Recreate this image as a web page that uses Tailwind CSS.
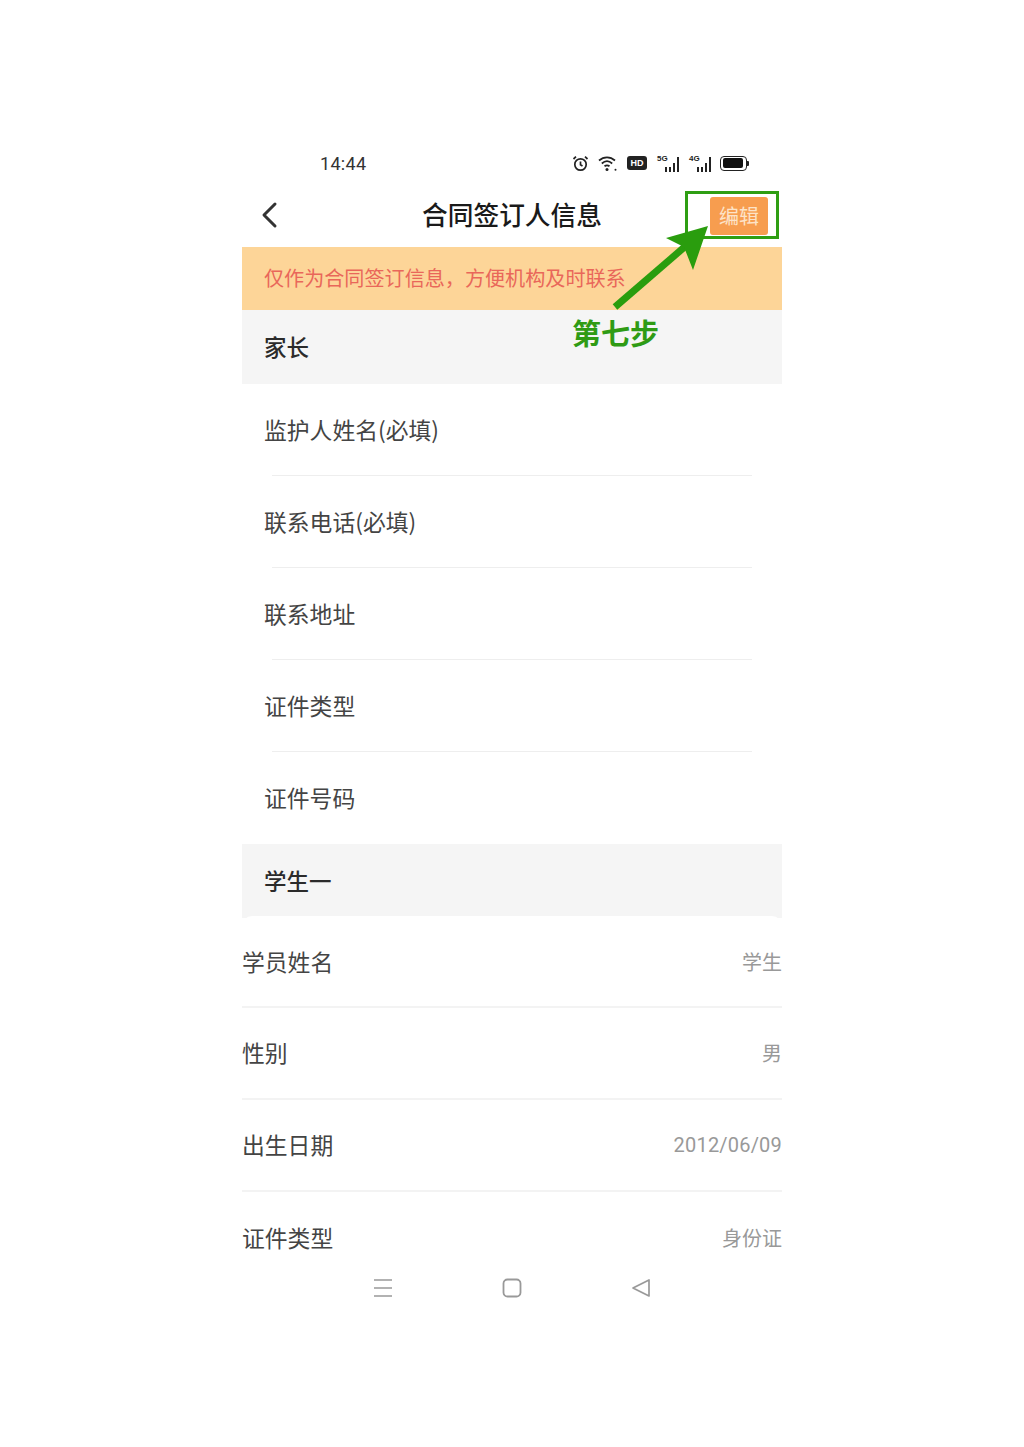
<!DOCTYPE html>
<html lang="zh"><head><meta charset="utf-8"><script src="https://cdn.jsdelivr.net/npm/@tailwindcss/browser@4"></script></head>
<body class="bg-white font-['Noto_Sans_CJK_SC','Noto_Sans',sans-serif]">
<div class="relative w-[1024px] h-[1447px] overflow-hidden flex justify-center pt-[145px]">
  <div class="w-[540px] h-[1170px] flex flex-col">
    <!-- status bar -->
    <div class="h-[36px] shrink-0 flex items-center justify-between pl-[78px] pr-[33px]">
      <span class="text-[18px] text-[#333] font-['Roboto','Inter',sans-serif] tracking-[0.3px]">14:44</span>
      <div class="flex items-center gap-[9px]">
        <svg width="17" height="17" viewBox="0 0 17 17" fill="none" stroke="#222" stroke-width="1.7"><circle cx="8.5" cy="9.5" r="5.7"/><path d="M8.5 6.5v3.2l2 1.2M1.5 4 4 1.7M15.5 4 13 1.7"/></svg>
        <svg width="20" height="17" viewBox="0 0 20 17" fill="none" stroke="#222" stroke-width="1.7"><path d="M1 5.5c4.800-4.300 11.200-4.300 16 0M3.800 8.500c3.200-2.800 7.200-2.800 10.400 0M6.500 11.300c1.700-1.300 3.300-1.300 5 0"/><circle cx="9" cy="14.500" r="1.500" fill="#222" stroke="none"/><circle cx="17.500" cy="14.800" r="1" fill="#222" stroke="none"/></svg>
        <div class="w-[20px] h-[14px] bg-[#222] rounded-[3px] text-white text-[9px] font-bold leading-[14px] text-center font-['Liberation_Sans',sans-serif]">HD</div>
        <div class="relative w-[22px] h-[17px] ml-[1px]">
          <span class="absolute left-0 top-[-2px] text-[8px] font-bold text-[#222] font-['Liberation_Sans',sans-serif]">5G</span>
          <div class="absolute inset-0 flex items-end justify-end gap-[2px]"><i class="w-[2px] h-[5px] bg-[#222]"></i><i class="w-[2px] h-[5px] bg-[#222]"></i><i class="w-[2px] h-[9px] bg-[#222]"></i><i class="w-[2px] h-[15px] bg-[#222]"></i></div>
        </div>
        <div class="relative w-[22px] h-[17px] ml-[1px]">
          <span class="absolute left-0 top-[-2px] text-[8px] font-bold text-[#222] font-['Liberation_Sans',sans-serif]">4G</span>
          <div class="absolute inset-0 flex items-end justify-end gap-[2px]"><i class="w-[2px] h-[5px] bg-[#222]"></i><i class="w-[2px] h-[5px] bg-[#222]"></i><i class="w-[2px] h-[9px] bg-[#222]"></i><i class="w-[2px] h-[15px] bg-[#222]"></i></div>
        </div>
        <div class="flex items-center">
          <div class="w-[27px] h-[15px] rounded-[4px] border-[1.5px] border-[#222] p-[1.5px]"><div class="w-[20px] h-full rounded-[2px] bg-[#111]"></div></div>
          <div class="w-[2px] h-[5px] bg-[#222] rounded-r-[1px]"></div>
        </div>
      </div>
    </div>
    <!-- nav -->
    <div class="relative h-[66px] shrink-0 flex items-center justify-center">
      <svg class="absolute left-[18px] top-[20px]" width="20" height="28" viewBox="0 0 20 28" fill="none" stroke="#333" stroke-width="3" stroke-linecap="round" stroke-linejoin="round"><path d="M15 3 4 14l11 11"/></svg>
      <span class="text-[25.700px] font-medium text-[#1a1a1a] leading-none">合同签订人信息</span>
      <div class="absolute left-[468px] top-[16px] w-[58px] h-[38px] rounded-[3px] bg-[#f79d4f] text-[#fde3c8] text-[20px] flex items-center justify-center">编辑</div>
    </div>
    <!-- banner -->
    <div class="h-[63px] shrink-0 bg-[#fdd598] flex items-center pl-[22px] text-[20.100px] text-[#e9675a] leading-none">仅作为合同签订信息，方便机构及时联系</div>
    <!-- section 1 -->
    <div class="h-[74px] shrink-0 bg-[#f5f5f5] flex items-center pl-[22px] text-[22.500px] text-[#2b2b2b] font-medium">家长</div>
    <div class="h-[92px] shrink-0 flex items-center pl-[22px] text-[22.800px] text-[#444]">监护人姓名(必填)</div>
    <div class="h-px shrink-0 -mt-px bg-[#eeeeee] ml-[30px] mr-[30px]"></div>
    <div class="h-[92px] shrink-0 flex items-center pl-[22px] text-[22.800px] text-[#444]">联系电话(必填)</div>
    <div class="h-px shrink-0 -mt-px bg-[#eeeeee] ml-[30px] mr-[30px]"></div>
    <div class="h-[92px] shrink-0 flex items-center pl-[22px] text-[22.800px] text-[#444]">联系地址</div>
    <div class="h-px shrink-0 -mt-px bg-[#eeeeee] ml-[30px] mr-[30px]"></div>
    <div class="h-[92px] shrink-0 flex items-center pl-[22px] text-[22.800px] text-[#444]">证件类型</div>
    <div class="h-px shrink-0 -mt-px bg-[#eeeeee] ml-[30px] mr-[30px]"></div>
    <div class="h-[92px] shrink-0 flex items-center pl-[22px] text-[22.800px] text-[#444]">证件号码</div>
    <!-- section 2 -->
    <div class="h-[74px] shrink-0 bg-[#f5f5f5] flex items-center pl-[22px] text-[22.500px] text-[#2b2b2b] font-medium">学生一</div>
    <div class="h-[92px] shrink-0 -mt-[2px] pt-[2px] bg-white rounded-t-[10px] flex items-center justify-between text-[22.800px] text-[#444] border-b-2 border-[#f3f3f3]"><span>学员姓名</span><span class="text-[20px] text-[#999]">学生</span></div>
    <div class="h-[92px] shrink-0 flex items-center justify-between text-[22.800px] text-[#444] border-b-2 border-[#f3f3f3]"><span>性别</span><span class="text-[20px] text-[#999]">男</span></div>
    <div class="h-[92px] shrink-0 flex items-center justify-between text-[22.800px] text-[#444] border-b-2 border-[#f3f3f3]"><span>出生日期</span><span class="text-[20px] text-[#999] font-['Roboto',sans-serif] tracking-[0.2px]">2012/06/09</span></div>
    <div class="h-[68px] shrink-0 overflow-hidden flex items-center pt-[24px] justify-between text-[22.800px] text-[#444]"><span>证件类型</span><span class="text-[20px] text-[#999]">身份证</span></div>
    <!-- nav buttons -->
    <div class="relative flex-1">
      <svg class="absolute left-[131px] top-[18px]" width="20" height="20" viewBox="0 0 20 20" stroke="#999" stroke-width="1.700" fill="none"><path d="M1 2h18M1 10h18M1 18h18"/></svg>
      <svg class="absolute left-[260px] top-[18px]" width="20" height="20" viewBox="0 0 20 20" stroke="#999" stroke-width="1.800" fill="none"><rect x="1.500" y="1.500" width="17" height="17" rx="4"/></svg>
      <svg class="absolute left-[389px] top-[18px]" width="20" height="20" viewBox="0 0 20 20" stroke="#999" stroke-width="1.700" fill="none" stroke-linejoin="round"><path d="M18 2v16L2 10z"/></svg>
    </div>
  </div>
  <!-- annotation overlay -->
  <div class="absolute left-[685px] top-[191px] w-[94px] h-[48px] border-[3px] border-[#2f9e13]"></div>
  <svg class="absolute left-[600px] top-[220px]" width="120" height="95" viewBox="0 0 120 95" fill="none"><path d="M15 87 88 24" stroke="#2a9d0e" stroke-width="7"/><path d="M108 6 66 18 84 27 93 50z" fill="#2a9d0e"/></svg>
  <div class="absolute left-[572px] top-[312px] text-[29px] leading-[40px] font-bold text-[#2f9b14]">第七步</div>
</div>
</body></html>
